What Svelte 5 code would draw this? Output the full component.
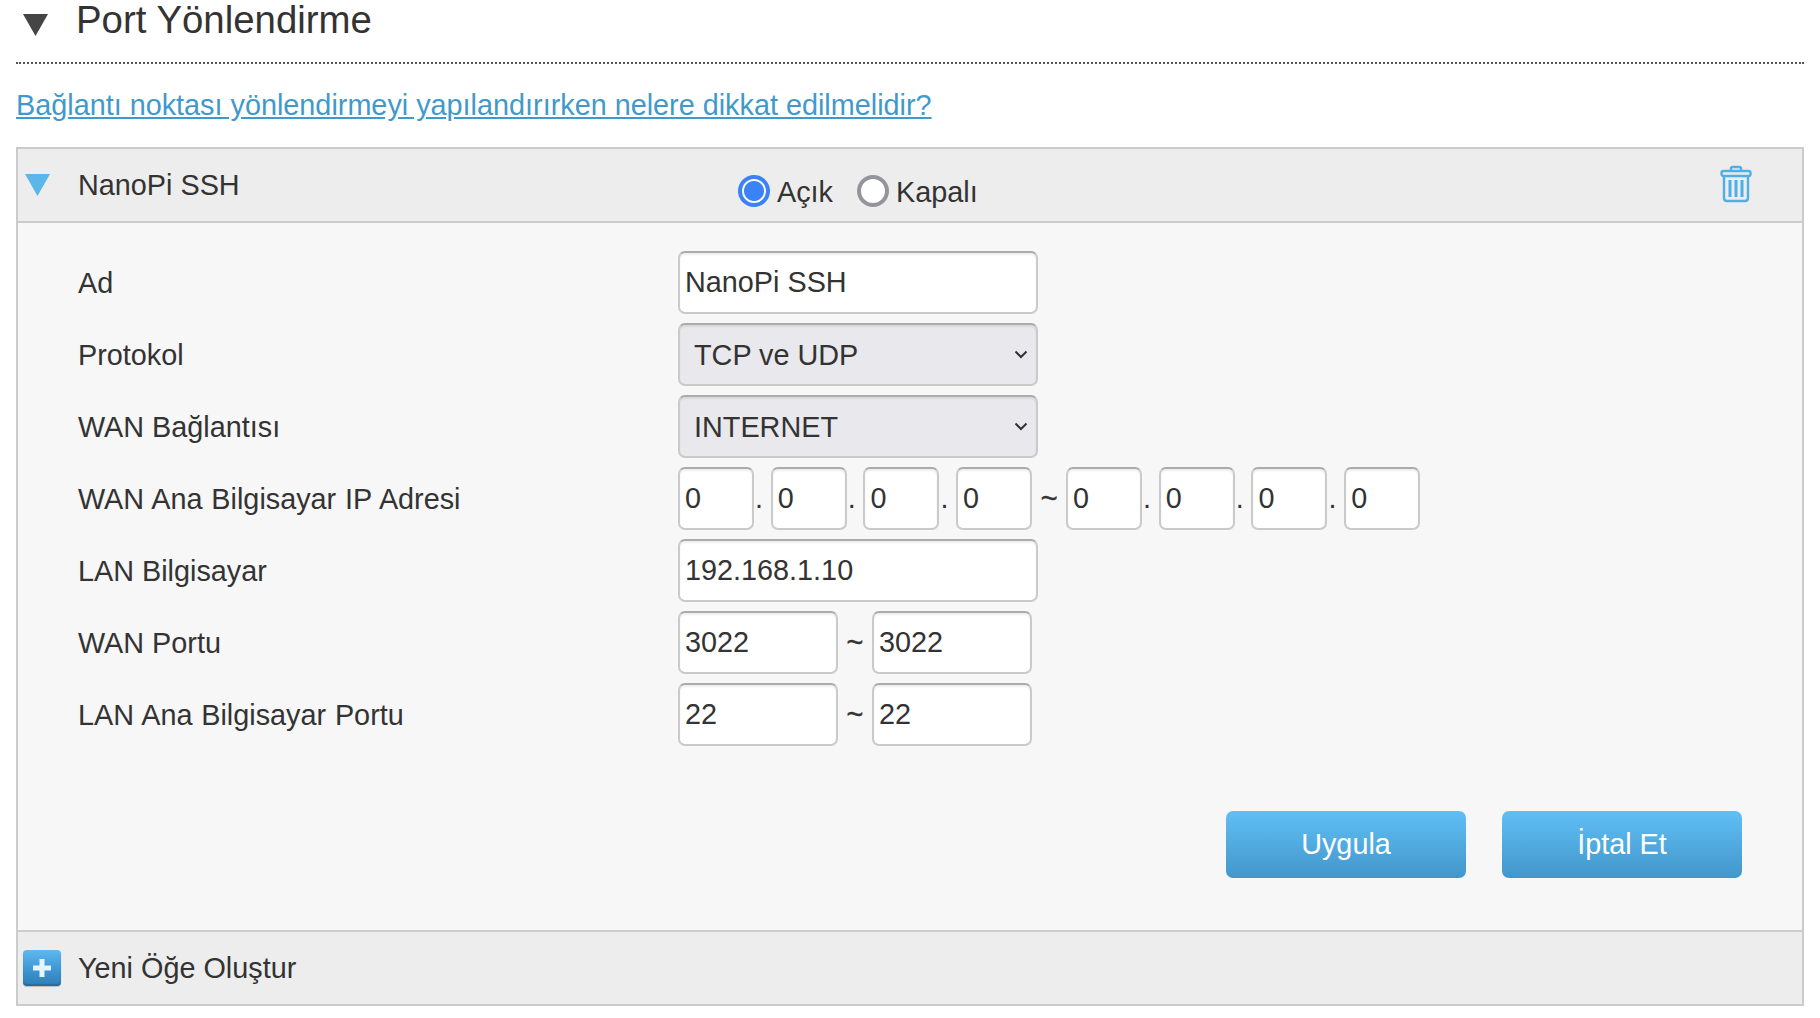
<script>
  // Port Yönlendirme settings panel
  const ipFrom = ["0", "0", "0", "0"];
  const ipTo = ["0", "0", "0", "0"];
  const ports = [
    { label: "WAN Portu", from: "3022", to: "3022" },
    { label: "LAN Ana Bilgisayar Portu", from: "22", to: "22" }
  ];
  let enabled = "on";
</script>

<div class="page">
  <div class="title-row">
    <svg class="arrow" width="25" height="22" viewBox="0 0 25 22"><polygon points="0,0 25,0 12.5,22" fill="#454545" /></svg>
    <h2>Port Yönlendirme</h2>
  </div>

  <a class="help" href="#help">Bağlantı noktası yönlendirmeyi yapılandırırken nelere dikkat edilmelidir?</a>

  <div class="panel">
    <div class="bar head">
      <svg class="arrow blue" width="25" height="22" viewBox="0 0 25 22"><polygon points="0,0 25,0 12.5,22" fill="#5bb6e9" /></svg>
      <span class="name">NanoPi SSH</span>
      <div class="radios">
        <label><input type="radio" bind:group={enabled} value="on" />Açık</label>
        <label><input type="radio" bind:group={enabled} value="off" />Kapalı</label>
      </div>
      <svg class="trash" width="32" height="38" viewBox="0 0 32 38" fill="none" stroke="#4fb0e8" stroke-width="2.4">
        <path d="M11 6V3.5q0-1.5 1.5-1.5h7q1.500 0 1.500 1.500V6" />
        <rect x="1.500" y="6" width="29" height="5" rx="2" />
        <path d="M4 11v22q0 3 3 3h18q3 0 3-3V11" />
        <path d="M10 15v17M16 15v17M22 15v17" stroke-width="3" />
      </svg>
    </div>

    <div class="body">
      <div class="rows">
        <div class="row">
          <span class="label">Ad</span>
          <input class="wide" value="NanoPi SSH" />
        </div>
        <div class="row">
          <span class="label">Protokol</span>
          <div class="select-wrap">
            <select><option>TCP ve UDP</option></select>
            <svg class="chevron" width="14" height="9" viewBox="0 0 14 9" fill="none" stroke="#333" stroke-width="2"><path d="M1.500 1.500 7 7l5.500-5.500" /></svg>
          </div>
        </div>
        <div class="row">
          <span class="label">WAN Bağlantısı</span>
          <div class="select-wrap">
            <select><option>INTERNET</option></select>
            <svg class="chevron" width="14" height="9" viewBox="0 0 14 9" fill="none" stroke="#333" stroke-width="2"><path d="M1.500 1.500 7 7l5.500-5.500" /></svg>
          </div>
        </div>
        <div class="row">
          <span class="label spaced">WAN Ana Bilgisayar IP Adresi</span>
          <div class="fields">
            {#each ipFrom as part, i}
              {#if i > 0}<span class="dot">.</span>{/if}
              <input class="octet" value={part} />
            {/each}
            <span class="tilde">~</span>
            {#each ipTo as part, i}
              {#if i > 0}<span class="dot">.</span>{/if}
              <input class="octet" value={part} />
            {/each}
          </div>
        </div>
        <div class="row">
          <span class="label">LAN Bilgisayar</span>
          <input class="wide" value="192.168.1.10" />
        </div>
        {#each ports as port, i}
          <div class="row">
            <span class="label" class:spaced={i === 1}>{port.label}</span>
            <div class="fields">
              <input class="port" value={port.from} />
              <span class="tilde">~</span>
              <input class="port" value={port.to} />
            </div>
          </div>
        {/each}
      </div>

      <div class="actions">
        <button>Uygula</button>
        <button>İptal Et</button>
      </div>
    </div>

    <div class="bar foot">
      <span class="plus"></span>
      <span class="name">Yeni Öğe Oluştur</span>
    </div>
  </div>
</div>

<style>
  :global(body) {
    background: #fff;
    font-family: "Liberation Sans", Arial, sans-serif;
    color: #333;
  }

  .page {
    padding: 0 16px;
    font-size: 28.8px;
  }

  .title-row {
    display: flex;
    align-items: center;
    box-sizing: border-box;
    height: 64px;
    padding: 0 0 22px 7px;
    border-bottom: 2px dotted #555;
  }

  .title-row .arrow {
    margin-top: 10px;
    filter: blur(0.5px);
  }

  h2 {
    margin: 0 0 0 28px;
    font-size: 38.4px;
    font-weight: 400;
    line-height: 40px;
  }

  .help {
    display: block;
    margin-top: 25px;
    color: #3f9acb;
    line-height: 33px;
    text-decoration: underline;
  }

  .panel {
    margin-top: 25px;
    border: 2px solid #ccc;
    background: #f7f7f7;
  }

  .bar {
    display: flex;
    align-items: center;
    background: #ededed;
  }

  .head {
    height: 72px;
    border-bottom: 2px solid #ccc;
    padding-left: 7px;
  }

  .blue {
    filter: blur(0.4px);
  }

  .name {
    margin-left: 28px;
  }

  .head .name {
    width: 660px;
  }

  .radios {
    display: flex;
    gap: 24px;
    margin-top: 14px;
  }

  .radios label {
    display: flex;
    align-items: center;
  }

  .radios input {
    appearance: none;
    box-sizing: border-box;
    width: 32px;
    height: 32px;
    margin: -2px 7px 0 0;
    border: 4px solid #94949c;
    border-radius: 50%;
    background: #fff;
  }

  .radios input:checked {
    border: 4px solid #3b82f6;
    background: radial-gradient(circle, #3b82f6 0 9.5px, #fff 10.500px);
  }

  .trash {
    margin-left: auto;
    margin-right: 50px;
    margin-top: -2px;
  }

  .body {
    padding: 28px 60px 52px;
  }

  .rows {
    display: flex;
    flex-direction: column;
    gap: 9px;
  }

  .row {
    display: grid;
    grid-template-columns: 600px 1fr;
    align-items: center;
    height: 63px;
  }

  .label {
    padding-top: 2px;
  }

  .spaced {
    word-spacing: 0.8px;
  }

  .fields {
    display: flex;
    align-items: center;
  }

  input:not([type="radio"]),
  select {
    box-sizing: border-box;
    height: 63px;
    margin: 0;
    border: 2px solid #cacaca;
    border-top-color: #ababab;
    border-radius: 7px;
    box-shadow: inset 0 2px 2px rgba(0, 0, 0, 0.07);
    background: #fff;
    color: #333;
    font: inherit;
    outline: none;
  }

  input:not([type="radio"]) {
    padding: 0 5px;
  }

  .wide {
    width: 360px;
  }

  .octet {
    width: 76px;
  }

  .port {
    width: 160px;
  }

  .dot {
    width: 16.7px;
    line-height: 63px;
    text-indent: 1px;
  }

  .tilde {
    width: 34px;
    text-align: center;
    line-height: 63px;
    -webkit-text-stroke: 0.5px #333;
  }

  .select-wrap {
    position: relative;
    width: 360px;
  }

  select {
    appearance: none;
    display: block;
    width: 100%;
    padding: 0 14px;
    background: #e8e8ed;
  }

  .chevron {
    position: absolute;
    top: 27px;
    right: 10px;
    pointer-events: none;
  }

  .actions {
    display: flex;
    justify-content: flex-end;
    gap: 36px;
    margin-top: 65px;
  }

  button {
    width: 240px;
    height: 67px;
    border: none;
    border-radius: 7px;
    background: linear-gradient(#60bff5, #4296cb);
    color: #fff;
    font: inherit;
  }

  .foot {
    height: 72px;
    border-top: 2px solid #ccc;
    padding-left: 5px;
  }

  .plus {
    position: relative;
    flex: none;
    width: 38px;
    height: 36px;
    border-radius: 4px;
    background: linear-gradient(#5db9f0, #3f96d2 55%, #2d7db5);
    box-shadow: inset 0 -2px 1px rgba(20, 70, 110, 0.35), 0 1px 1px rgba(0, 0, 0, 0.2);
  }

  .plus::before,
  .plus::after {
    content: "";
    position: absolute;
    left: 50%;
    top: 50%;
    background: #e8f4fc;
    transform: translate(-50%, -50%);
  }

  .plus::before {
    width: 18px;
    height: 5px;
  }

  .plus::after {
    width: 5px;
    height: 18px;
  }

  .foot .name {
    margin-left: 17px;
  }
</style>
